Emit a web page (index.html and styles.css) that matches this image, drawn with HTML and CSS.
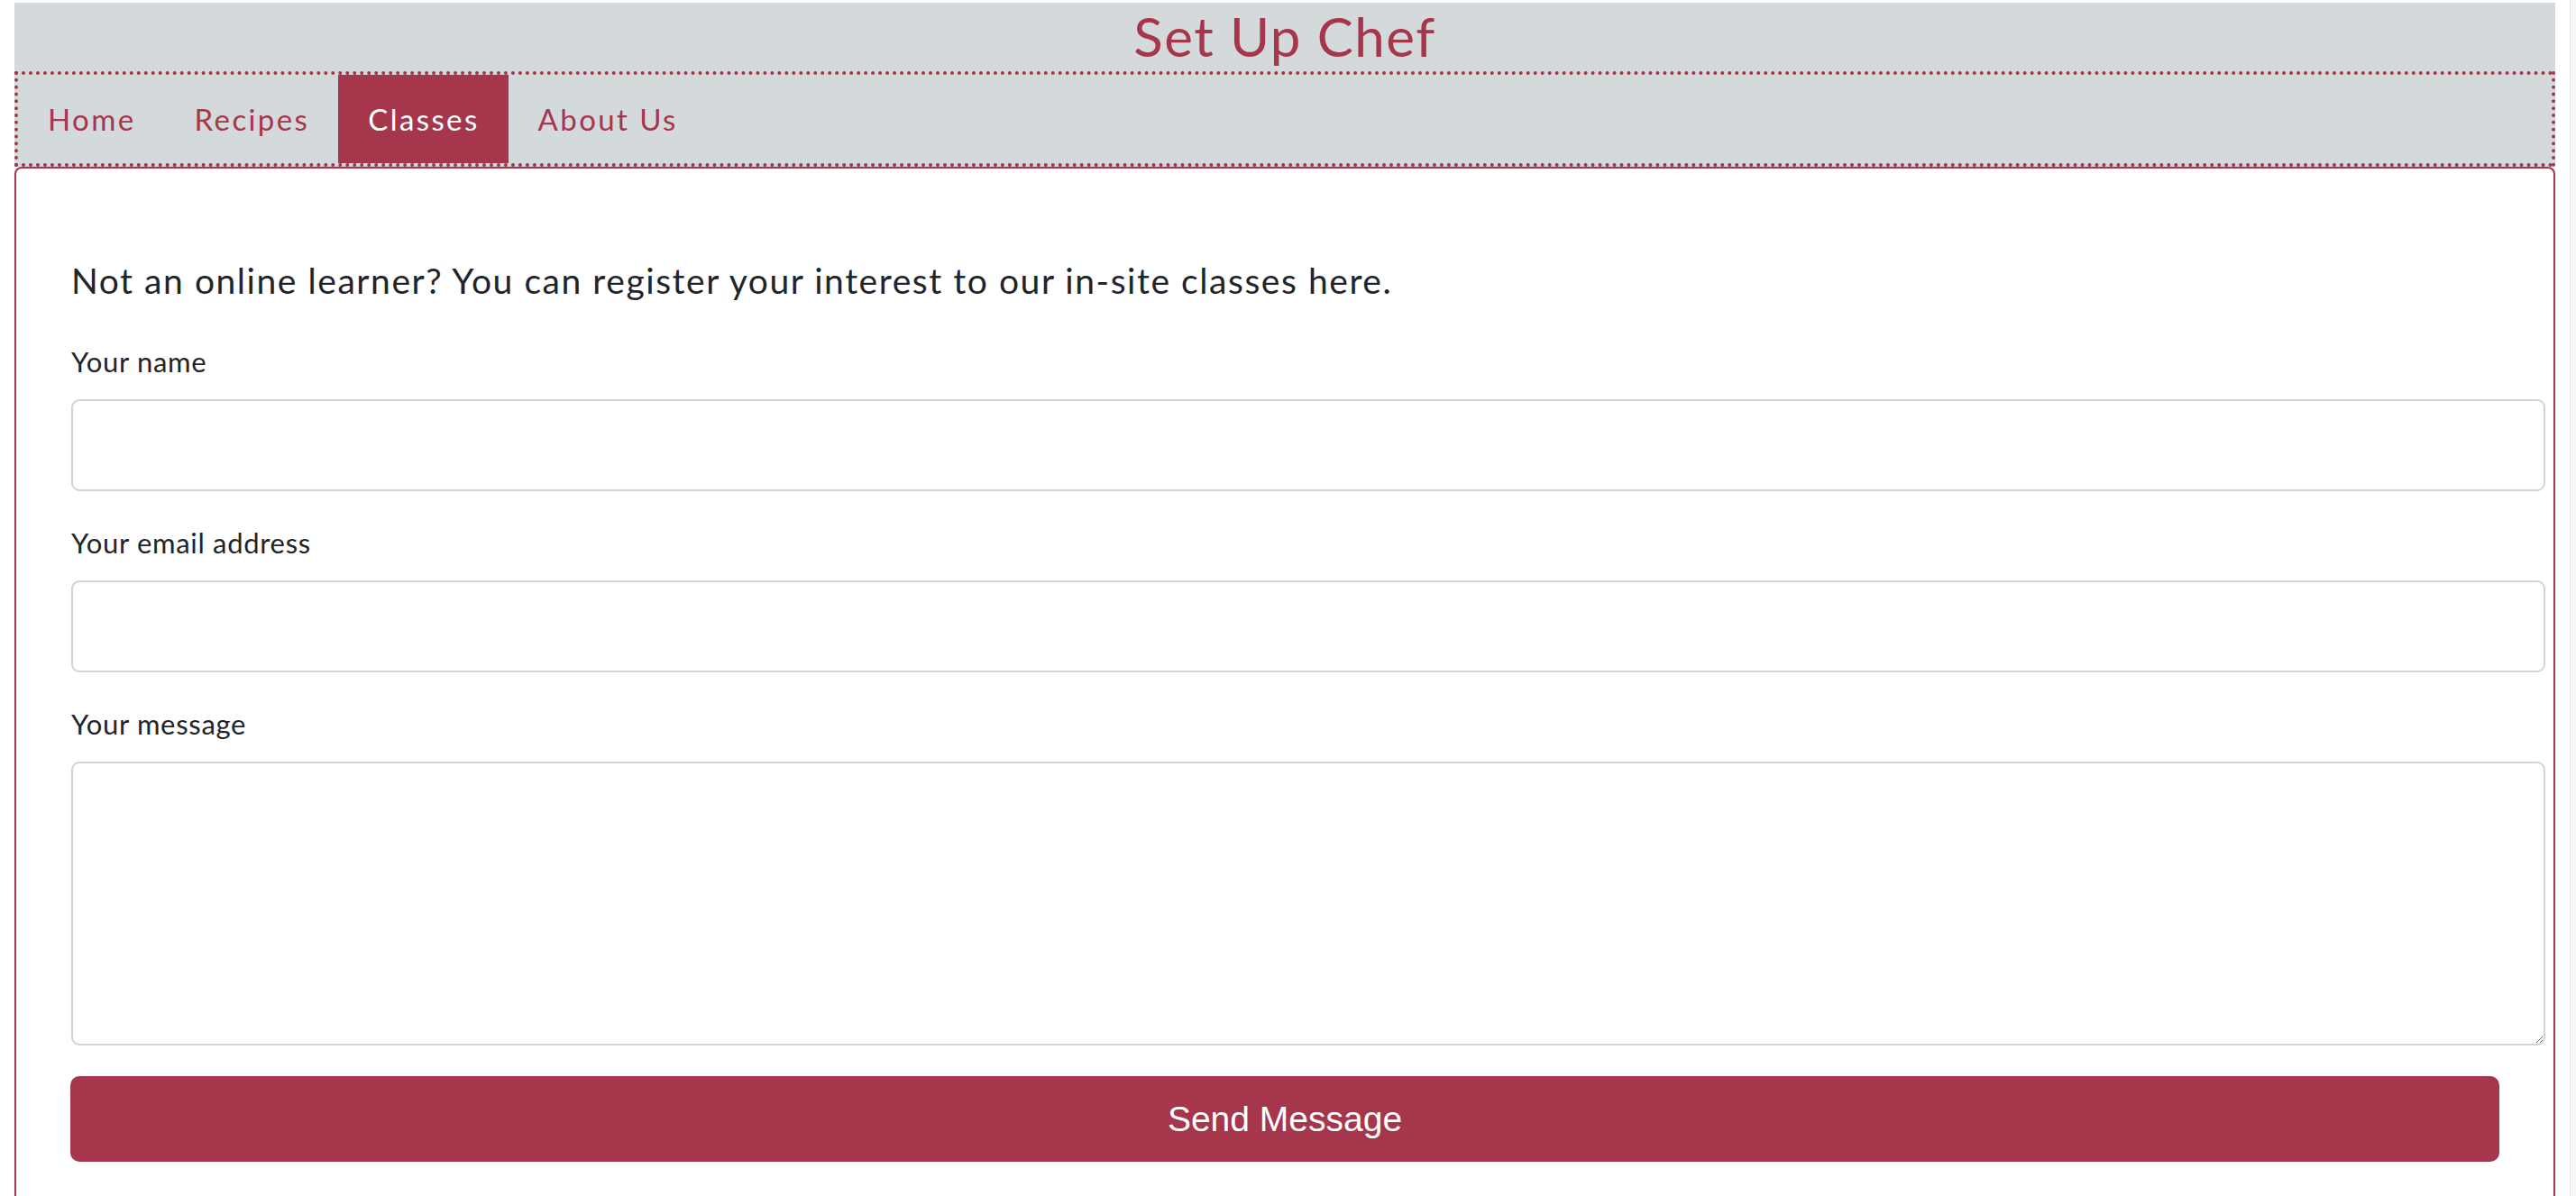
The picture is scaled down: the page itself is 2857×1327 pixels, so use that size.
FILE: index.html
```html
<!DOCTYPE html>
<html lang="en">
<head>
<meta charset="utf-8">
<title>Set Up Chef - Classes</title>
<link rel="stylesheet" href="styles.css">
</head>
<body>
<header class="site-header">
  <h1 class="site-title">Set Up Chef</h1>
  <nav class="main-nav">
    <a class="nav-link" href="#">Home</a>
    <a class="nav-link" href="#">Recipes</a>
    <a class="nav-link active" href="#">Classes</a>
    <a class="nav-link" href="#">About Us</a>
  </nav>
</header>
<main class="content">
  <form class="contact-form">
    <h2 class="intro">Not an online learner? You can register your interest to our in-site classes here.</h2>
    <div class="field">
      <label class="field-label" for="name">Your name</label>
      <input class="field-input" id="name" type="text">
    </div>
    <div class="field">
      <label class="field-label" for="email">Your email address</label>
      <input class="field-input" id="email" type="email">
    </div>
    <div class="field field-last">
      <label class="field-label" for="message">Your message</label>
      <textarea class="field-input field-textarea" id="message"></textarea>
    </div>
    <button class="send-btn" type="button">Send Message</button>
  </form>
</main>
<div class="scroll-track"></div>
</body>
</html>
```
FILE: styles.css
```css
html {
  overflow: hidden;
  background: #ffffff;
}
body {
  margin: 3px 23px 0 16px;
  font-family: "Lato", "Noto Sans", sans-serif;
  color: #212529;
}
.site-header {
  background: #d4dadb;
}
.site-title {
  margin: 0;
  height: 76px;
  line-height: 74px;
  font-size: 60px;
  letter-spacing: 1.5px;
  font-weight: 400;
  text-align: center;
  color: #a5364b;
}
.main-nav {
  display: flex;
  border: 4px dotted #a5364b;
  height: 98px;
}
.nav-link {
  display: block;
  padding: 0 32px 0 33px;
  line-height: 98px;
  font-size: 33px;
  letter-spacing: 2.4px;
  color: #a5364b;
  text-decoration: none;
}
.nav-link.active {
  background: #a5364b;
  color: #ffffff;
}
.content {
  border: 2px solid #a5364b;
  border-bottom: none;
  border-radius: 8px 8px 0 0;
  padding: 102px 0 200px 61px;
}
.contact-form {
  width: 2744px;
}
.intro {
  margin: 0 0 50px 0;
  font-size: 39px;
  line-height: 44px;
  letter-spacing: 1.55px;
  font-weight: 400;
}
.field {
  margin-bottom: 39px;
}
.field-last {
  margin-bottom: 34px;
}
.field-label {
  display: block;
  font-size: 31px;
  line-height: 36px;
  letter-spacing: 0.7px;
  margin-bottom: 24px;
}
.field-input {
  display: block;
  box-sizing: border-box;
  width: 100%;
  height: 102px;
  border: 2px solid #ced4da;
  border-radius: 9px;
  background: #ffffff;
  font-family: inherit;
  font-size: 30px;
  padding: 12px 24px;
  margin: 0;
}
.field-textarea {
  height: 315px;
}
.send-btn {
  display: block;
  width: 2694px;
  height: 95px;
  margin-left: -1px;
  border: none;
  border-radius: 10px;
  background: #a5364b;
  color: #ffffff;
  font-family: "Liberation Sans", Arial, sans-serif;
  font-size: 39px;
  line-height: 95px;
  padding: 0;
}
.scroll-track {
  position: fixed;
  top: 0;
  right: 0;
  width: 6px;
  height: 100%;
  background: #f6f6f6;
  border-left: 1px solid #e6e6e6;
}
```
